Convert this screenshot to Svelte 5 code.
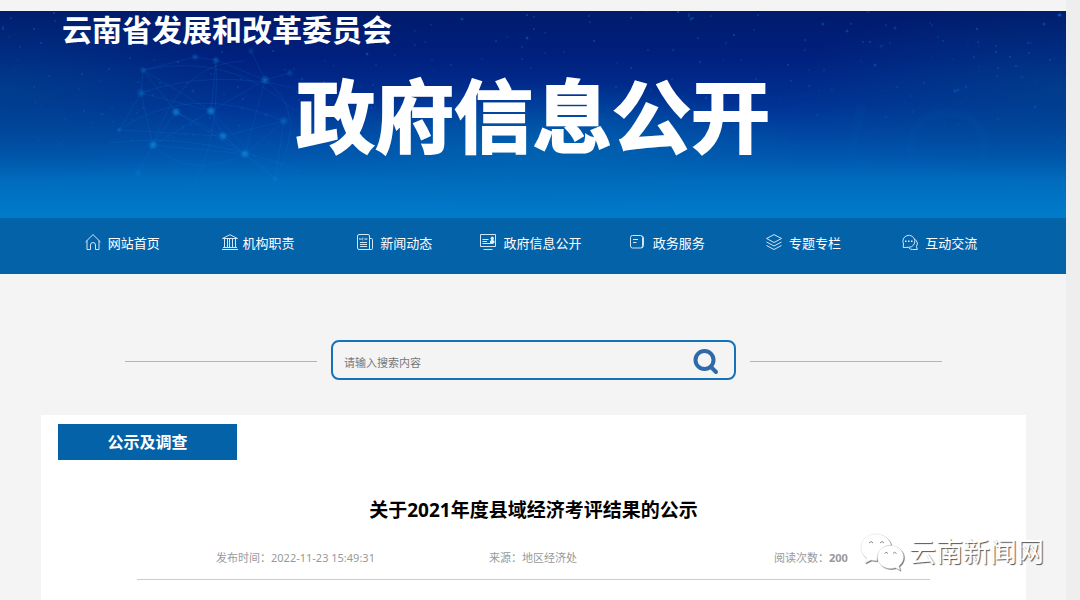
<script>
  const navItems = [
    { icon: 'home', label: '网站首页' },
    { icon: 'bank', label: '机构职责' },
    { icon: 'news', label: '新闻动态' },
    { icon: 'board', label: '政府信息公开' },
    { icon: 'book', label: '政务服务' },
    { icon: 'layers', label: '专题专栏' },
    { icon: 'chat', label: '互动交流' }
  ];

  // Seeded scatter of faint stars over the banner.
  let seed = 29;
  function random() {
    seed = (seed * 16807) % 2147483647;
    return seed / 2147483647;
  }
  const stars = Array.from({ length: 340 }, () => {
    const y = random() * 165;
    return {
      x: Math.round(random() * 1066),
      y: Math.round(y),
      r: random() > 0.8 ? 1.5 : 1,
      o: (0.15 + random() * 0.4) * (1 - y / 220)
    };
  });

  const nodes = [
    [153, 134, 4, 0.8], [176, 101, 4, 0.75], [211, 100, 4, 0.8], [223, 125, 4, 0.75],
    [245, 143, 4, 0.8], [265, 69, 4, 0.5], [284, 110, 4, 0.4], [216, 49, 3, 0.4],
    [195, 46, 3, 0.35], [141, 82, 4, 0.35], [143, 59, 3, 0.3], [275, 168, 3, 0.35],
    [119, 119, 2, 0.35], [138, 162, 3, 0.3], [251, 40, 3, 0.2], [290, 62, 3, 0.25]
  ];
  const links = [
    [0, 1], [0, 9], [0, 2], [1, 4], [1, 3], [1, 10], [2, 5], [2, 7], [2, 3], [3, 4],
    [3, 6], [3, 12], [4, 5], [4, 6], [6, 11], [5, 7], [7, 8], [8, 10], [9, 10], [9, 2],
    [0, 13], [4, 11], [0, 4], [5, 15], [5, 14], [2, 11], [3, 11], [10, 2], [9, 12]
  ];
</script>

<div class="page">
  <header>
    <svg class="sky" viewBox="0 0 1066 207" preserveAspectRatio="xMidYMid slice" aria-hidden="true">
      <defs>
        <radialGradient id="edge"><stop offset="0" stop-color="#00508c" stop-opacity=".45" /><stop offset="1" stop-color="#00508c" stop-opacity="0" /></radialGradient>
        <radialGradient id="glow"><stop offset="0" stop-color="#006cb4" stop-opacity=".6" /><stop offset="1" stop-color="#006cb4" stop-opacity="0" /></radialGradient>
        <radialGradient id="node"><stop offset="0" stop-color="#0b8be0" /><stop offset=".5" stop-color="#0b7cd4" stop-opacity=".7" /><stop offset="1" stop-color="#0b7cd4" stop-opacity="0" /></radialGradient>
      </defs>
      <ellipse cx="0" cy="80" rx="260" ry="90" fill="url(#edge)" />
      <ellipse cx="1066" cy="80" rx="280" ry="90" fill="url(#edge)" />
      <ellipse cx="540" cy="135" rx="260" ry="65" fill="url(#glow)" />
      <g fill="none" stroke="#1583da" stroke-opacity=".16">
        {#each links as [a, b]}
          <path d="M{nodes[a][0]} {nodes[a][1]}L{nodes[b][0]} {nodes[b][1]}" />
        {/each}
        <path d="M119 119Q190 70 284 110M141 82Q210 58 290 76M153 134Q180 50 245 50M265 69Q310 100 275 168M153 134Q190 170 245 143M216 49Q220 130 190 182M110 132Q200 120 300 160M143 59Q230 40 295 100" />
      </g>
      {#each nodes as [x, y, r, o]}
        <circle cx={x} cy={y} r={r + 1} fill="url(#node)" opacity={o} />
      {/each}
      {#each stars as s}
        <circle cx={s.x} cy={s.y} r={s.r} fill="#0a78d8" opacity={s.o} />
      {/each}
      <g fill="none" stroke="#0563c4" stroke-width="9" stroke-opacity=".08">
        <path d="M913 160Q902 102 948 102Q994 102 980 160" />
        <path d="M847 165Q858 105 862 95" />
      </g>
    </svg>
    <p class="org">云南省发展和改革委员会</p>
    <h1>政府信息公开</h1>
  </header>

  <nav>
    {#each navItems as item}
      <a href="#{item.icon}" class:close={item.icon === 'bank'}>
        <svg viewBox="0 0 16 16" aria-hidden="true">
          {#if item.icon === 'home'}
            <path d="M.5 8 8 .6 15.500 8M2 6.500V15.500h3.500v-4.500a2.500 2.500 0 0 1 5 0v4.500H14V6.500" />
          {:else if item.icon === 'bank'}
            <path d="M.5 4.500 8 .7l7.500 3.800zM2.500 4.500v9M5.500 4.500v9M7.500 4.500v9M10.500 4.500v9M13.500 4.500v9M1 13.500h14M0 15.500h16" />
          {:else if item.icon === 'news'}
            <path d="M2 .5h9q1.500 0 1.500 1.500v13.500H2q-1.500 0-1.500-1.500V2Q.5.5 2 .5zM12.500 4.500h2q1 0 1 1v9q0 1-1 1h-2M3 8.500h7M3 10.500h7M3 12.500h7" />
            <path class="fine" d="M2.500 6V4l1.500 2V4M6.500 4H5v2h1.500M5 5h1.300M7.500 4l.7 2 .7-2 .7 2 .7-2" />
          {:else if item.icon === 'board'}
            <path d="M.5.500h15v12H.5zM2.500 5.500h6M2.500 7.500h4.500M2.500 9.500h11M3.500 15.500h9" />
            <path class="solid" d="M10 9V7l1.500-1a1.700 1.700 0 1 1 1.500 0l1.500 1v2z" />
          {:else if item.icon === 'book'}
            <path d="M2.500 1.500h8q2 0 2 2V12q0 2-2 2h-8q-2 0-2-2V3.500q0-2 2-2zM11.500 2q2 0 2 2v7.500q0 2-2 2.500M3 5.500h5M3 8.500h3.500" />
          {:else if item.icon === 'layers'}
            <path d="M8 .6 15.500 4.500 8 8.500.5 4.500zM.5 8 8 12l7.500-4M.5 11.500l7.500 4 7.500-4" />
          {:else}
            <path d="M1.200 13.500l.3-3.500A6 6 0 1 1 6.800 13.300zM13.500 5.500q3.500 3.500 1 7l.8 3H10.500q-2.500 0-4-2" />
            <path class="solid" d="M3 6.500h1.500V8H3zM6 6.500h1.500V8H6zM9 6.500h1.500V8H9z" />
          {/if}
        </svg>
        <span>{item.label}</span>
      </a>
    {/each}
  </nav>

  <form class="search" role="search" onsubmit={(e) => e.preventDefault()}>
    <div class="box">
      <input type="text" placeholder="请输入搜索内容" aria-label="请输入搜索内容" />
      <button type="submit" aria-label="搜索">
        <svg viewBox="0 0 26 26" aria-hidden="true"><circle cx="11.500" cy="11" r="9" /><path d="M18 18l5 5" /></svg>
      </button>
    </div>
  </form>

  <main>
    <h2>公示及调查</h2>
    <article>
      <h3>关于2021年度县域经济考评结果的公示</h3>
      <div class="meta">
        <span>发布时间：2022-11-23 15:49:31</span>
        <span>来源：地区经济处</span>
        <span>阅读次数：<b>200</b></span>
      </div>
    </article>
  </main>

  <div class="mark">
    <svg viewBox="0 0 46 40" aria-hidden="true">
      <path d="M17 2C8 2 2 8 2 15.500c0 4.500 2 8 5.500 10.500L6 31l6-3q2.500.8 6 .8C17 21 23 13.500 32 13 30.500 6.500 24.500 2 17 2z" />
      <path d="M31.500 13.500c-7.500 0-13 5-13 11.500s5.500 11.500 13 11.500q2.500 0 5-.8l4.500 2.500-1.200-4.200C42.500 31.800 44.500 29 44.500 25c0-6.500-5.500-11.500-13-11.500z" />
      <path class="eye" d="M10 11q2-3 4 0M21 11q2-3 4 0M25.500 21.500q1.500-2.500 3.500 0M34 21.500q1.500-2.500 3.500 0" />
    </svg>
    <span>云南新闻网</span>
  </div>
</div>

<style>
  :global(body) {
    margin: 0;
    background: #eee;
  }
  .page {
    position: relative;
    display: flex;
    flex-direction: column;
    box-sizing: border-box;
    min-height: 100vh;
    margin-right: 14px;
    padding-top: 11px;
    background: #f4f4f4;
    font-family: 'Noto Sans', 'Noto Sans CJK SC', sans-serif;
  }
  header {
    position: relative;
    padding: 0 62px 52px;
    background: linear-gradient(#001b6c, #00207e 22%, #003294 45%, #0056ad 70%, #006cbd 82%, #007ccb);
    color: #fff;
    text-align: center;
  }
  .sky {
    position: absolute;
    inset: 0;
    width: 100%;
    height: 100%;
  }
  .org {
    position: relative;
    margin: 0;
    font-size: 30px;
    font-weight: 700;
    line-height: 38px;
    text-align: left;
  }
  h1 {
    position: relative;
    margin: 18px 0 0;
    font-size: 79px;
    font-weight: 700;
    line-height: 99px;
    -webkit-text-stroke: 2px #fff;
  }
  nav {
    display: grid;
    grid-template-columns: repeat(7, 1fr);
    padding: 0 58px 0 54px;
    background: #0462a8;
  }
  nav a {
    display: flex;
    align-items: center;
    justify-content: center;
    gap: 7px;
    height: 56px;
    color: #fff;
    font-size: 13px;
    line-height: 20px;
    text-decoration: none;
    white-space: nowrap;
  }
  nav a.close {
    gap: 4px;
  }
  nav svg {
    width: 16px;
    height: 16px;
    margin-bottom: 8px;
    fill: none;
    stroke: #d3e5f3;
    stroke-width: 1;
  }
  nav span {
    margin-bottom: 6px;
  }
  nav .fine {
    stroke-width: 0.5;
  }
  nav .solid {
    fill: #e4eff8;
    stroke: none;
  }
  .search {
    display: flex;
    align-items: center;
    gap: 14px;
    margin: 66px 124px 35px 125px;
  }
  .search::before,
  .search::after {
    content: '';
    flex: 1;
    height: 1px;
    margin-top: 2px;
    background: #b4b4b4;
  }
  .box {
    display: flex;
    align-items: center;
    box-sizing: border-box;
    width: 405px;
    height: 40px;
    padding: 0 15px 0 11px;
    border: 2px solid #1672b8;
    border-radius: 8px;
  }
  input {
    flex: 1;
    min-width: 0;
    padding: 6px 0 0;
    border: 0;
    outline: 0;
    background: none;
    font: 11px/20px 'Noto Sans', 'Noto Sans CJK SC', sans-serif;
  }
  input::placeholder {
    color: #777;
    opacity: 1;
  }
  button {
    display: flex;
    padding: 3px 0 0;
    border: 0;
    background: none;
  }
  button svg {
    width: 26px;
    height: 26px;
    fill: none;
    stroke: #2e69a8;
    stroke-width: 4;
    stroke-linecap: round;
  }
  main {
    flex: 1;
    margin: 0 40px 0 41px;
    padding: 9px 17px 0;
    background: #fff;
  }
  h2 {
    width: 179px;
    margin: 0;
    background: #0462a8;
    color: #fff;
    font-size: 16px;
    line-height: 36px;
    text-align: center;
  }
  article {
    margin: 0 79px;
  }
  h3 {
    margin: 36px 0 0;
    color: #000;
    font-size: 19px;
    line-height: 28px;
    text-align: center;
  }
  .meta {
    display: grid;
    grid-template-columns: 273fr 285fr 77fr;
    padding: 24px 79px 11px;
    border-bottom: 1px solid #ccc;
    color: #999;
    font-size: 11px;
    line-height: 20px;
    white-space: nowrap;
  }
  .mark {
    position: absolute;
    right: 22px;
    bottom: 28px;
    display: flex;
    align-items: center;
    gap: 4px;
    color: #fff;
    font-size: 27px;
    line-height: 40px;
    text-shadow: 1px 1px 1px #555;
  }
  .mark svg {
    width: 46px;
    height: 40px;
    fill: #fff;
    stroke: #ddd;
    stroke-width: 0.5;
    filter: drop-shadow(1px 1px 0.5px #777);
  }
  .mark .eye {
    fill: none;
    stroke: #888;
    stroke-width: 1;
  }
</style>
